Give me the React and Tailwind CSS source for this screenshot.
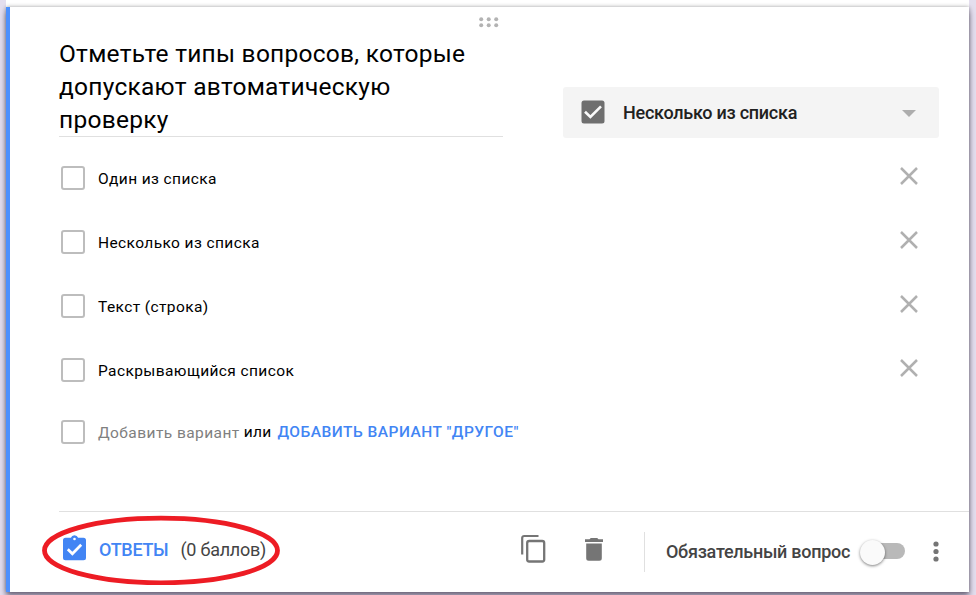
const OPTIONS = ['Один из списка', 'Несколько из списка', 'Текст (строка)', 'Раскрывающийся список'];

function DragHandle() {
  return (
    <svg width="20" height="11" viewBox="0 0 20 11" fill="#b3b3b3" className="mr-0.5 shrink-0">
      {[2.2, 9.7, 17.2].map((x) =>
        [2.2, 8.3].map((y) => <circle key={`${x}-${y}`} cx={x} cy={y} r="2" />)
      )}
    </svg>
  );
}

function EmptyBox() {
  return <span className="size-6 shrink-0 rounded-[3px] border-2 border-[#bdbdbd] bg-white" />;
}

function CloseIcon() {
  return (
    <svg width="18" height="18" viewBox="0 0 18 18" stroke="#b0b0b0" strokeWidth="2.5" className="shrink-0">
      <path d="M1 1L17 17M17 1L1 17" />
    </svg>
  );
}

function Option({ label }) {
  return (
    <li className="flex h-16 items-center">
      <EmptyBox />
      <span className="ml-[13px] grow pt-px text-[15.5px] leading-6 tracking-[0.4px] text-black">{label}</span>
      <span className="mr-[51px] mb-1 flex">
        <CloseIcon />
      </span>
    </li>
  );
}

function TypeSelect() {
  return (
    <div className="mt-[54px] flex h-[51px] w-[376px] items-center rounded-[3px] bg-[#f4f4f4] pl-[18px] pr-[23px]">
      <svg width="24" height="24" viewBox="0 0 24 24" className="mb-0.5 shrink-0">
        <rect x="0.5" y="0.5" width="23" height="23" rx="2.5" fill="#6f6f6f" />
        <path d="M4 11.7L9.4 17L20 6.3" fill="none" stroke="#fafafa" strokeWidth="2.6" />
      </svg>
      <span className="ml-[18px] grow text-[18px] font-medium tracking-[-0.26px] text-[#212121]">Несколько из списка</span>
      <svg width="14" height="7" viewBox="0 0 14 7" fill="#adadad" className="mt-0.5">
        <path d="M0 0H14L7 7Z" />
      </svg>
    </div>
  );
}

function Footer() {
  return (
    <footer className="ml-[49px] flex h-[81px] items-center border-t border-[#e0e0e0]">
      <div className="relative flex w-[461px] items-center pb-1">
        <svg width="23" height="26" viewBox="0 0 23 26" className="ml-1 mb-[5px] shrink-0">
          <path
            d="M2.5 2.8H7.9A3.8 3.8 0 0 1 15.1 2.8H20.5A2.5 2.5 0 0 1 23 5.3V22.8A2.5 2.5 0 0 1 20.5 25.3H2.5A2.5 2.5 0 0 1 0 22.8V5.3A2.5 2.5 0 0 1 2.5 2.8Z"
            fill="#4285f4"
          />
          <circle cx="11.5" cy="4" r="1.3" fill="#fff" />
          <path d="M4.8 14.2L9.4 18.8L18.2 9.8" fill="none" stroke="#fff" strokeWidth="2.7" />
        </svg>
        <span className="ml-[13px] text-[18px] font-medium leading-6 tracking-[-0.3px] text-[#4285f4]">ОТВЕТЫ</span>
        <span className="ml-3 text-[18px] leading-6 tracking-[-0.25px] text-[#444]">(0 баллов)</span>
        <svg width="240" height="70" viewBox="0 0 240 70" className="absolute -left-[18px] -top-[20px]">
          <ellipse cx="120" cy="35.5" rx="116.5" ry="32.3" fill="none" stroke="#ed1c24" strokeWidth="4.8" />
        </svg>
      </div>
      <svg width="26" height="29" viewBox="0 0 26 29" fill="none" stroke="#757575" className="mb-[7px] shrink-0">
        <path d="M2.2 20.5V4A2 2 0 0 1 4.2 2H18.5" strokeWidth="2.2" />
        <rect x="7.2" y="7" width="17" height="20.5" rx="2" strokeWidth="2.3" />
      </svg>
      <svg width="18" height="23" viewBox="0 0 18 23" fill="#757575" className="mb-[5px] ml-[39px] shrink-0">
        <path d="M0 1.3H4.5L5.8 0H12.2L13.5 1.3H18V4H0ZM1.2 5.5H16.8V20.3A2.5 2.5 0 0 1 14.3 22.8H3.7A2.5 2.5 0 0 1 1.2 20.3Z" />
      </svg>
      <div className="ml-[41px] h-10 w-px bg-[#e0e0e0]" />
      <span className="ml-[21px] w-[194px] whitespace-nowrap pb-0.5 text-[18px] font-medium tracking-[-0.28px] text-[#444]">
        Обязательный вопрос
      </span>
      <div className="relative mb-0.5 h-4 w-[45px]">
        <span className="absolute right-0 top-0 h-4 w-9 rounded-full bg-[#b9b9b9]" />
        <span className="absolute left-0 -top-[3px] size-[25px] rounded-full bg-[#fafafa] shadow-[0_1px_3px_rgba(0,0,0,0.5)]" />
      </div>
      <svg width="6" height="21" viewBox="0 0 6 21" fill="#757575" className="mb-0.5 ml-7">
        <circle cx="3" cy="3" r="2.6" />
        <circle cx="3" cy="10.5" r="2.6" />
        <circle cx="3" cy="18" r="2.6" />
      </svg>
    </footer>
  );
}

export default function App() {
  return (
    <main className="h-[595px] w-[976px] overflow-hidden bg-[#e4deee] pl-1.5 font-['Roboto',sans-serif]">
      <div className="h-[7px] w-[963px] bg-white" />
      <section className="relative flex h-[585px] w-[963px] flex-col border-l-4 border-[#4d90fe] bg-white shadow-[0_0_4px_rgba(0,0,0,0.35),0_5px_6px_rgba(40,30,60,0.5)]">
        <div className="flex h-[26px] justify-center pt-[10px]">
          <DragHandle />
        </div>
        <div className="flex h-[113px] items-start pl-[49px]">
          <h1 className="mt-[3px] h-[101px] w-[444px] border-b border-[#e0e0e0] pt-px text-[24.5px] leading-[33px] tracking-[0.26px] text-black">
            Отметьте типы вопросов, которые
            <br />
            допускают автоматическую
            <br />
            проверку
          </h1>
          <div className="ml-[60px]">
            <TypeSelect />
          </div>
        </div>
        <ul className="pl-[51px]">
          {OPTIONS.map((label) => (
            <Option key={label} label={label} />
          ))}
        </ul>
        <div className="flex h-[60px] items-center pl-[51px] text-[15.5px]">
          <EmptyBox />
          <span className="ml-[13px] pt-[3px] tracking-[0.43px] text-[#808080]">Добавить вариант</span>
          <span className="ml-1 pt-0.5 tracking-[0.3px] text-black">или</span>
          <span className="ml-[6px] pt-0.5 font-medium tracking-[0.48px] text-[#4285f4]">ДОБАВИТЬ ВАРИАНТ "ДРУГОЕ"</span>
        </div>
        <div className="mt-auto">
          <Footer />
        </div>
      </section>
    </main>
  );
}
